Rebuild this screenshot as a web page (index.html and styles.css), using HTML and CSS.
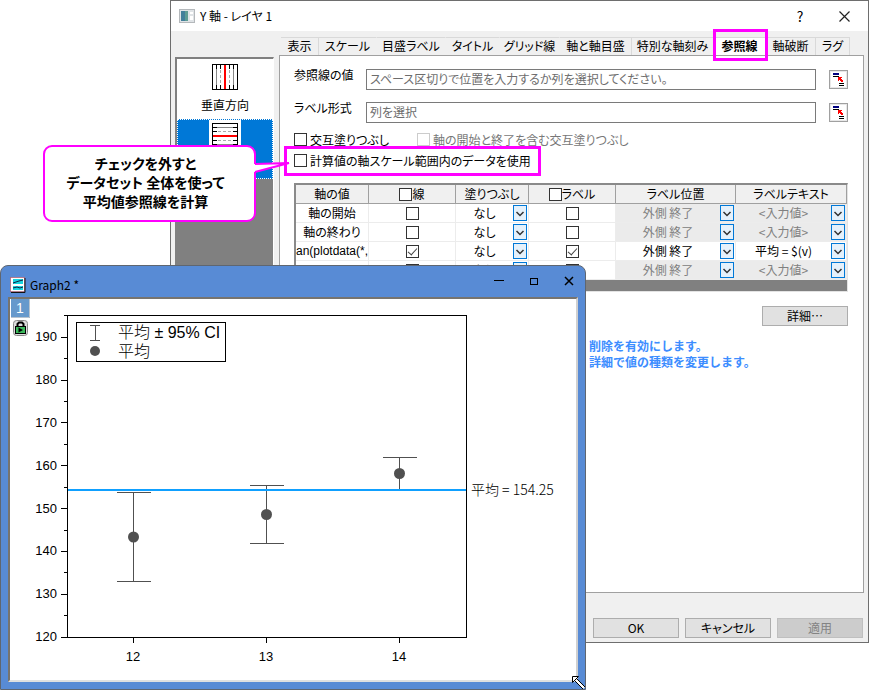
FILE: index.html
```html
<!DOCTYPE html>
<html lang="ja">
<head>
<meta charset="utf-8">
<title>Y 軸 - レイヤ 1</title>
<link rel="stylesheet" href="styles.css">
</head>
<body>
<svg class="defs" aria-hidden="true">
  <symbol id="chev" viewBox="0 0 12 14"><path d="M2.500 6L6 9.500L9.500 6" fill="none" stroke="#333" stroke-width="1.500"/></symbol>
  <symbol id="pick" viewBox="1 1 17 17">
    <rect x="2" y="2" width="15" height="15" fill="#fff"/>
    <path d="M4 3h6v2h-6z" fill="#000080"/><path d="M4 6h6v1h-6zM10 13h5v1h-5zM10 15h5v1h-5z" fill="#000"/>
    <path d="M9 7h4v1h-1v1h1v1h1v2h-2v-1h-1v-1h-1v1h-1z" fill="#f00"/>
  </symbol>
</svg>
<main class="desktop">
  <section class="dialog">
    <header class="dialog-title">
      <svg width="16" height="14" viewBox="0 0 16 14"><rect x=".5" y=".5" width="15" height="13" fill="#dfe3e6" stroke="#b4b8bb"/><rect x="2" y="2" width="7" height="10" fill="#5d9c94"/><path d="M2 2h4v10h-4z" fill="#427f9a"/><path d="M11 3h3v2h-3zM11 7h3v4h-3z" fill="#fff"/></svg>
      <h1>Y 軸 - レイヤ 1</h1>
      <button class="plain help" type="button" aria-label="ヘルプ">?</button>
      <button class="plain" type="button" aria-label="閉じる"><svg width="11" height="11" viewBox="0 0 11 11"><path d="M.5 .5L10.500 10.500M10.500 .5L.5 10.500" stroke="#222" stroke-width="1.200"/></svg></button>
    </header>
    <div class="dialog-body">
      <nav class="side">
        <button class="side-item" type="button">
          <svg width="26" height="26" viewBox="0 0 26 26"><rect x=".5" y=".5" width="25" height="25" fill="#fff" stroke="#000"/><path d="M4.500 1v24M21.500 1v24" stroke="#888"/><path d="M8.500 1v24M17.500 1v24" stroke="#aaa" stroke-dasharray="3 2"/><path d="M4.500 1v4M8.500 1v4M17.500 1v4M21.500 1v4M4.500 21v4M8.500 21v4M17.500 21v4M21.500 21v4" stroke="#000"/><path d="M13 1v24" stroke="#f00" stroke-width="2"/></svg>
          <span>垂直方向</span>
        </button>
        <button class="side-item selected" type="button">
          <svg width="32" height="32" viewBox="-3 -3 32 32"><rect x="-3" y="-3" width="32" height="32" fill="#fff"/><rect x=".5" y=".5" width="25" height="25" fill="#fff" stroke="#000"/><path d="M1 4.500h24M1 21.500h24" stroke="#888"/><path d="M1 8.500h24M1 17.500h24" stroke="#aaa" stroke-dasharray="3 2"/><path d="M1 4.500h4M1 8.500h4M1 17.500h4M1 21.500h4M21 4.500h4M21 8.500h4M21 17.500h4M21 21.500h4" stroke="#000"/><path d="M1 13h24" stroke="#f00" stroke-width="2"/></svg>
          <span>水平方向</span>
        </button>
      </nav>
      <div class="pane">
        <div class="tabs" role="tablist">
          <button class="tab ruled" type="button" role="tab">表示</button>
          <button class="tab" type="button" role="tab">スケール</button>
          <button class="tab" type="button" role="tab">目盛ラベル</button>
          <button class="tab" type="button" role="tab">タイトル</button>
          <button class="tab" type="button" role="tab">グリッド線</button>
          <button class="tab ruled" type="button" role="tab">軸と軸目盛</button>
          <button class="tab" type="button" role="tab">特別な軸刻み</button>
          <button class="tab active" type="button" role="tab" aria-selected="true">参照線</button>
          <button class="tab ruled" type="button" role="tab">軸破断</button>
          <button class="tab ruled" type="button" role="tab">ラグ</button>
        </div>
        <form class="page">
          <div class="field">
            <label for="refval">参照線の値</label>
            <input id="refval" type="text" placeholder="スペース区切りで位置を入力するか列を選択してください。">
            <button class="pick" type="button" aria-label="列を選択"><svg width="17" height="17"><use href="#pick"/></svg></button>
          </div>
          <div class="field">
            <label for="labfmt">ラベル形式</label>
            <input id="labfmt" type="text" placeholder="列を選択">
            <button class="pick" type="button" aria-label="列を選択"><svg width="17" height="17"><use href="#pick"/></svg></button>
          </div>
          <div class="checks">
            <label class="check"><input type="checkbox">交互塗りつぶし</label>
            <label class="check off"><input type="checkbox" disabled>軸の開始と終了を含む交互塗りつぶし</label>
          </div>
          <div class="checks">
            <label class="check marked"><input type="checkbox">計算値の軸スケール範囲内のデータを使用</label>
          </div>
          <div class="sheet">
            <table>
              <colgroup><col class="c1"><col class="c2"><col class="c3"><col class="c2"><col class="c5"><col></colgroup>
              <thead><tr><th>軸の値</th><th><label class="check tight"><input type="checkbox">線</label></th><th>塗りつぶし</th><th><label class="check tight"><input type="checkbox">ラベル</label></th><th>ラベル位置</th><th>ラベルテキスト</th></tr></thead>
              <tbody>
                <tr>
                  <td>軸の開始</td><td><input type="checkbox" aria-label="線"></td>
                  <td><div class="combo"><select aria-label="塗りつぶし"><option>なし</option></select><svg><use href="#chev"/></svg></div></td>
                  <td><input type="checkbox" aria-label="ラベル"></td>
                  <td class="dim"><div class="combo"><select aria-label="ラベル位置"><option>外側 終了</option></select><svg><use href="#chev"/></svg></div></td>
                  <td class="dim"><div class="combo"><select aria-label="ラベルテキスト"><option>&lt;入力値&gt;</option></select><svg><use href="#chev"/></svg></div></td>
                </tr>
                <tr>
                  <td>軸の終わり</td><td><input type="checkbox" aria-label="線"></td>
                  <td><div class="combo"><select aria-label="塗りつぶし"><option>なし</option></select><svg><use href="#chev"/></svg></div></td>
                  <td><input type="checkbox" aria-label="ラベル"></td>
                  <td class="dim"><div class="combo"><select aria-label="ラベル位置"><option>外側 終了</option></select><svg><use href="#chev"/></svg></div></td>
                  <td class="dim"><div class="combo"><select aria-label="ラベルテキスト"><option>&lt;入力値&gt;</option></select><svg><use href="#chev"/></svg></div></td>
                </tr>
                <tr>
                  <td class="expr">an(plotdata(*,</td><td><input type="checkbox" aria-label="線" checked></td>
                  <td><div class="combo"><select aria-label="塗りつぶし"><option>なし</option></select><svg><use href="#chev"/></svg></div></td>
                  <td><input type="checkbox" aria-label="ラベル" checked></td>
                  <td><div class="combo"><select aria-label="ラベル位置"><option>外側 終了</option></select><svg><use href="#chev"/></svg></div></td>
                  <td><div class="combo"><select aria-label="ラベルテキスト"><option>平均 = $(v)</option></select><svg><use href="#chev"/></svg></div></td>
                </tr>
                <tr>
                  <td></td><td><input type="checkbox" aria-label="線"></td>
                  <td><div class="combo"><select aria-label="塗りつぶし"><option>なし</option></select><svg><use href="#chev"/></svg></div></td>
                  <td><input type="checkbox" aria-label="ラベル"></td>
                  <td class="dim"><div class="combo"><select aria-label="ラベル位置"><option>外側 終了</option></select><svg><use href="#chev"/></svg></div></td>
                  <td class="dim"><div class="combo"><select aria-label="ラベルテキスト"><option>&lt;入力値&gt;</option></select><svg><use href="#chev"/></svg></div></td>
                </tr>
              </tbody>
            </table>
          </div>
          <div class="details"><button class="btn" type="button">詳細…</button></div>
          <p class="hint">削除を有効にします。<br>詳細で値の種類を変更します。</p>
        </form>
      </div>
    </div>
    <footer class="actions">
      <button class="btn" type="button">OK</button>
      <button class="btn" type="button">キャンセル</button>
      <button class="btn" type="button" disabled>適用</button>
    </footer>
  </section>

  <aside class="callout">チェックを外すと<br>データセット 全体を使って<br>平均値参照線を計算
    <svg class="tail" width="36" height="14" viewBox="0 0 36 14"><path d="M0 3L2 3L35 2L2 11L0 11z" fill="#fff"/><path d="M1 3L35 2L1 11" fill="none" stroke="#f0f" stroke-width="2"/></svg>
  </aside>

  <section class="graph">
    <header class="graph-title">
      <svg width="16" height="16" viewBox="0 0 16 16"><rect x=".5" y=".5" width="14" height="14" fill="#fff" stroke="#b33" stroke-dasharray="1 1"/><path d="M15 1v14.500H1" fill="none" stroke="#111"/><path d="M3 2h10v5h-10zM3 9h10v4h-10z" fill="#19d5e0"/><path d="M3 6l3-1 3-1 4-1M3 11l4-1 3 1 3-1" fill="none" stroke="#124" stroke-width="1"/></svg>
      <h2>Graph2 *</h2>
      <button class="plain" type="button" aria-label="最小化"><svg width="10" height="10"><path d="M0 4.500h10" stroke="#000"/></svg></button>
      <button class="plain" type="button" aria-label="最大化"><svg width="10" height="10"><rect x="1.500" y="2.500" width="7" height="6" fill="none" stroke="#000"/></svg></button>
      <button class="plain" type="button" aria-label="閉じる"><svg width="10" height="10"><path d="M1 1L9 9M9 1L1 9" stroke="#000" stroke-width="1.500"/></svg></button>
    </header>
    <div class="canvas">
      <svg viewBox="10 299 566 381" class="chart" role="img" aria-label="平均 ± 95% CI">
        <rect x="11" y="299" width="19" height="19" fill="#69c"/><path d="M29.500 299v18.500H11" fill="none" stroke="#b9c4cf"/>
        <text x="20" y="313" class="layer">1</text>
        <rect x="13.500" y="320.500" width="14" height="15" rx="3" fill="#ddd" stroke="#888"/>
        <path d="M17.500 327v-3l1.500-1.500h3l1.500 1.500v3" fill="none" stroke="#000" stroke-width="2"/>
        <rect x="15.500" y="326.500" width="10" height="7" fill="#3cba5c" stroke="#000"/><path d="M18.500 327.500v5l4.500-2.500z" fill="#000"/>
        <g fill="none" stroke="#000" shape-rendering="crispEdges">
          <path d="M67.500 315.500H466.500V637.500H67.500z"/>
          <path d="M61 337.500h6M61 380.500h6M61 422.500h6M61 465.500h6M61 508.500h6M61 551.500h6M61 594.500h6M61 637.500h6"/>
          <path d="M64 315.500h3M64 358.500h3M64 401.500h3M64 444.500h3M64 487.500h3M64 530.500h3M64 572.500h3M64 615.500h3"/>
          <path d="M133.500 637v6M266.500 637v6M399.500 637v6"/>
          <rect x="76.500" y="322.500" width="149" height="39"/>
        </g>
        <g fill="none" stroke="#505050" shape-rendering="crispEdges">
          <path d="M117 492.500h34M133.500 492v89M117 581.500h34M250 485.500h34M266.500 485v58M250 543.500h34M383 457.500h34M399.500 457v33"/>
          <path d="M90 325.500h10M95.500 325v15M90 340.500h10"/>
        </g>
        <path d="M68 490h398" stroke="#0fa0ff" stroke-width="2"/>
        <g fill="#505050"><circle cx="133.500" cy="537" r="5.500"/><circle cx="266.500" cy="514.500" r="5.500"/><circle cx="399.500" cy="473.500" r="5.500"/><circle cx="95" cy="351" r="5"/></g>
        <g class="yt"><text x="57" y="341">190</text><text x="57" y="384">180</text><text x="57" y="427">170</text><text x="57" y="470">160</text><text x="57" y="513">150</text><text x="57" y="555">140</text><text x="57" y="598">130</text><text x="57" y="641">120</text></g>
        <g class="xt"><text x="133" y="661">12</text><text x="266" y="661">13</text><text x="399" y="661">14</text></g>
        <text class="legend" x="118" y="338">平均 ± 95% CI</text><text class="legend" x="118" y="357">平均</text>
        <text class="ref" x="471" y="495">平均 = 154.25</text>
      </svg>
    </div>
    <svg class="grip" width="13" height="13" viewBox="0 0 13 13"><path d="M4 4L12 12" stroke="#fff" stroke-width="3"/><path d="M5 3L13 11M3 5L11 13" stroke="#000"/><path d="M.5 .5H6.500L.5 6.500z" fill="#fff" stroke="#000"/></svg>
  </section>
</main>
</body>
</html>
```
FILE: styles.css
```css
* { box-sizing: border-box; }
body { margin: 0; background: #fff; color: #000; font: 12px/16px "Noto Sans CJK JP", sans-serif; font-feature-settings: "palt"; }
button, input, select { font: inherit; font-feature-settings: inherit; color: inherit; }
button { padding: 0; }
.defs { display: none; }
svg { display: block; flex: none; }
h1, h2, p { margin: 0; font-size: 12px; font-weight: 400; }
.desktop { position: relative; min-height: 100vh; padding: 0 0 47px 170px; display: flex; overflow: hidden; }

.dialog { flex: 1; min-width: 0; display: flex; flex-direction: column; border: 1px solid #6e6e6e; background: #f0f0f0; }
.dialog-title { height: 30px; padding: 0 18px 0 8px; display: flex; align-items: center; gap: 5px; background: #fff; }
.dialog-title h1 { flex: 1; }
.plain { border: 0; background: none; }
.help { width: 12px; margin-right: 28px; font-size: 14px; }
.dialog-body { flex: 1; display: grid; grid-template-columns: 99px 1fr; column-gap: 5px; padding: 6px 4px 0; }
.side { margin-top: 20px; background: #808080; border: 2px solid #808080; border-right: 1px solid #fff; border-bottom: 0; display: flex; flex-direction: column; }
.side-item { height: 60px; padding-top: 5px; border: 0; background: #fff; display: flex; flex-direction: column; align-items: center; gap: 7px; }
.side-item.selected { padding-top: 0; background: #0078d7; color: #fff; border: 1px dotted #fff; }
.pane { display: flex; flex-direction: column; min-width: 0; }
.tabs { height: 18px; margin-left: 2px; display: grid; grid-template-columns: 38px 58px 69px 54px 60px 72px 82px 52px 50px 34px; }
.tab { border: 0; border-top: 1px solid #d9d9d9; border-right: 1px solid transparent; background: none; line-height: 15px; white-space: nowrap; display: flex; justify-content: center; }
.tab.ruled { border-right-color: #d9d9d9; }
.tab.active { position: relative; background: #fff; font-weight: 700; }
.tab.active::after { content: ""; position: absolute; inset: -9px -3px -6px -1px; border: 3px solid #f0f; z-index: 1; }
.page { flex: 1; padding: 13px 15px 0 14px; background: #fff; border: 1px solid #a0a0a0; }
.field { display: grid; grid-template-columns: 72px 1fr 32px; margin-bottom: 12px; height: 21px; }
.field label { line-height: 12px; }
.field input { min-width: 0; height: 21px; padding: 0 3px 2px; border: 1px solid #7a7a7a; background: #fff; }
.field input::placeholder { color: #6d6d6d; opacity: 1; }
.pick { width: 19px; height: 19px; margin-top: 1px; justify-self: end; border: 1px solid #a0a0a0; background: #e8e8e8; display: grid; place-items: center; }
.checks { display: flex; height: 21px; gap: 28px; }
.field + .checks { margin-top: -6px; }
.check { display: flex; align-items: center; gap: 3px; position: relative; white-space: nowrap; }
.check.off { color: #777; }
.check.marked::after { content: ""; position: absolute; inset: -4px -10px -5px; border: 3px solid #f0f; }
.check.tight { gap: 0; justify-content: center; }
input[type="checkbox"] { appearance: none; position: relative; width: 13px; height: 13px; margin: 0; border: 1px solid #333; background: #fff; flex: none; display: block; }
input[type="checkbox"]:disabled { border-color: #ccc; }
input[type="checkbox"]:checked::after { content: ""; position: absolute; left: 3px; top: 0; width: 4px; height: 8px; border: solid #444; border-width: 0 1px 1px 0; transform: rotate(42deg); }

.sheet { margin-top: 12px; padding-bottom: 11px; background: #808080; border: 2px solid; border-width: 2px 1px 1px 2px; border-color: #8a8a8a #e3e3e3 #e3e3e3 #8a8a8a; }
table { width: 100%; table-layout: fixed; border-collapse: separate; border-spacing: 0; background: #fff; }
.c1, .c3 { width: 73px; }
.c2 { width: 87px; }
.c5 { width: 120px; }
th, td { height: 19px; padding: 0; font-weight: 400; text-align: center; line-height: 16px; white-space: nowrap; overflow: hidden; }
th { background: #f0f0f0; border-right: 1px solid #a0a0a0; border-bottom: 1px solid #a0a0a0; }
td { border-right: 1px solid #ececec; border-bottom: 1px solid #ececec; }
td > input[type="checkbox"] { margin: 0 auto; }
.expr { font-family: "Liberation Sans", sans-serif; }
.dim { background: #ebebeb; color: #808080; }
.combo { display: flex; align-items: center; padding-right: 1px; height: 17px; }
.combo select { appearance: none; flex: 1; min-width: 0; height: 16px; padding: 0; border: 0; background: none; text-align: center; text-align-last: center; }
.combo svg { width: 14px; height: 16px; border: 1px solid #0078d7; background: #e5f1fb; pointer-events: none; }
.btn { width: 86px; height: 20px; border: 1px solid #adadad; background: #e1e1e1; line-height: 16px; }
.btn:disabled { background: #ccc; border-color: #bfbfbf; color: #838383; }
.details { display: flex; justify-content: flex-end; margin-top: 14px; }
.hint { margin: 12px 0 0 295px; color: #3c8dff; font-weight: 700; font-feature-settings: normal; white-space: nowrap; }
.actions { display: flex; justify-content: flex-end; gap: 6px; padding: 25px 5px 4px; }

.callout { position: absolute; left: 43px; top: 145px; width: 213px; padding: 7px 8px 9px 0; border: 2px solid #f0f; border-radius: 9px; background: #fff; font-size: 14px; font-weight: 700; line-height: 19px; text-align: center; white-space: nowrap; }
.tail { position: absolute; left: 209px; top: 14px; }

.graph { position: absolute; left: 0; top: 265px; bottom: 0; width: 586px; display: flex; flex-direction: column; padding: 0 7px 7px; border: 1px solid #5f6670; border-radius: 8px 8px 0 0; background: #588bd5; }
.graph-title { flex: none; height: 31px; padding: 6px 4px 0 2px; display: flex; align-items: center; gap: 25px; }
.graph-title h2 { flex: 1; margin-left: -21px; }
.graph-title .plain { margin-top: -8px; }
.canvas { flex: 1; background: #fff; border: 2px solid; border-color: #77746f #d0d0d0 #e0e0e0 #77746f; }
.chart { width: 100%; }
.chart text { fill: #000; }
.chart .layer { font-family: "Liberation Sans", sans-serif; font-size: 14px; fill: #fff; text-anchor: middle; }
.yt, .xt { font-family: "Liberation Sans", sans-serif; font-size: 13px; }
.yt { text-anchor: end; }
.xt { text-anchor: middle; }
.legend { font-family: "Liberation Sans", "Noto Sans CJK JP", sans-serif; font-size: 16px; font-weight: 300; }
.ref { font-size: 14px; font-weight: 300; }
.grip { position: absolute; right: 0; bottom: 0; }
```
